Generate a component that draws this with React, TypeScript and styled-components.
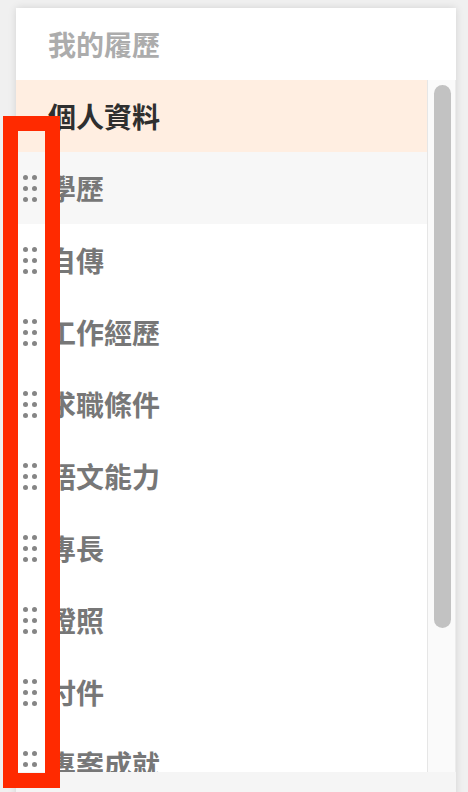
import React from "react";
import styled, { createGlobalStyle } from "styled-components";

const GlobalStyle = createGlobalStyle`
  html, body {
    margin: 0;
    padding: 0;
    height: 792px;
    overflow: hidden;
    background: #f0f0f0;
    font-family: "Noto Sans CJK TC", "Noto Sans", sans-serif;
  }
  * { box-sizing: border-box; }
`;

const Page = styled.div`
  position: relative;
  padding: 8px 12px 0 16px;
  height: 792px;
`;

const Card = styled.div`
  width: 440px;
  height: 840px;
  background: #ffffff;
  box-shadow: 0 0 8px rgba(0, 0, 0, 0.12);
  display: flex;
  flex-direction: column;
`;

const Header = styled.div`
  height: 72px;
  flex: none;
  display: flex;
  align-items: center;
  padding-left: 32px;
  font-size: 28px;
  font-weight: 700;
  color: #acacac;
`;

const ScrollArea = styled.div`
  height: 692px;
  flex: none;
  display: flex;
  overflow: hidden;
`;

const List = styled.ul`
  list-style: none;
  margin: 0;
  padding: 0;
  flex: 1;
  min-width: 0;
  overflow: hidden;
`;

const Track = styled.div`
  width: 29px;
  flex: none;
  background: #fafafa;
  border-left: 1px solid #e6e6e6;
  border-right: 1px solid #ececec;
  padding: 5px 4px 0 6px;
`;

const Thumb = styled.div`
  width: 17px;
  height: 543px;
  border-radius: 9px;
  background: #c2c2c2;
`;

const Row = styled.li<{ $tone: "active" | "hover" | "plain" }>`
  height: 72px;
  display: flex;
  align-items: center;
  padding-left: 7px;
  font-size: 28px;
  font-weight: 700;
  white-space: nowrap;
  background: ${(p) =>
    p.$tone === "active" ? "#ffeee1" : p.$tone === "hover" ? "#f7f7f7" : "#ffffff"};
  color: ${(p) => (p.$tone === "active" ? "#2f2f2f" : "#777777")};
`;

const Handle = styled.span<{ $hidden?: boolean }>`
  width: 15px;
  margin-right: 10px;
  display: grid;
  grid-template-columns: 5px 5px;
  grid-auto-rows: 5px;
  column-gap: 4px;
  row-gap: 6px;
  visibility: ${(p) => (p.$hidden ? "hidden" : "visible")};
`;

const Dot = styled.span`
  width: 5px;
  height: 5px;
  border-radius: 50%;
  background: #858585;
`;

const Label = styled.span`
  line-height: 1;
`;

const Footer = styled.div`
  flex: 1;
  background: #f5f5f5;
`;

const Annotation = styled.div`
  position: absolute;
  left: 3px;
  top: 116px;
  width: 57px;
  height: 672px;
  border: 15px solid #ff2a00;
  pointer-events: none;
`;

const items = [
  "個人資料",
  "學歷",
  "自傳",
  "工作經歷",
  "求職條件",
  "語文能力",
  "專長",
  "證照",
  "付件",
  "專案成就",
];

export default function App() {
  return (
    <>
      <GlobalStyle />
      <Page>
        <Card>
          <Header>我的履歷</Header>
          <ScrollArea>
            <List>
              {items.map((name, i) => (
                <Row key={name} $tone={i === 0 ? "active" : i === 1 ? "hover" : "plain"}>
                  <Handle $hidden={i === 0}>
                    {Array.from({ length: 6 }).map((_, d) => (
                      <Dot key={d} />
                    ))}
                  </Handle>
                  <Label>{name}</Label>
                </Row>
              ))}
            </List>
            <Track>
              <Thumb />
            </Track>
          </ScrollArea>
          <Footer />
        </Card>
        <Annotation />
      </Page>
    </>
  );
}
